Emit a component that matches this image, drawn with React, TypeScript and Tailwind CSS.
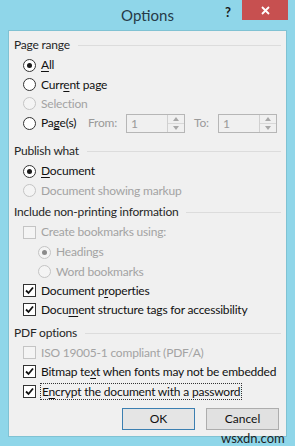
import React from "react";

const FONT = { fontFamily: 'Lato, "Noto Sans", sans-serif' };

function Radio({ checked = false, disabled = false }: { checked?: boolean; disabled?: boolean }) {
  return (
    <span
      className={
        "flex items-center justify-center w-[13px] h-[13px] rounded-full border shrink-0 " +
        (disabled ? "border-[#c4c4c4] bg-[#f4f4f4]" : "border-[#333333] bg-white")
      }
    >
      {checked && (
        <span className={"w-[5px] h-[5px] rounded-full " + (disabled ? "bg-[#8a8a8a]" : "bg-[#1a1a1a]")} />
      )}
    </span>
  );
}

function Check({ checked = false, disabled = false }: { checked?: boolean; disabled?: boolean }) {
  return (
    <span
      className={
        "flex items-center justify-center w-[13px] h-[13px] border shrink-0 " +
        (disabled ? "border-[#c4c4c4] bg-[#f4f4f4]" : "border-[#333333] bg-white")
      }
    >
      {checked && (
        <svg width="9" height="9" viewBox="0 0 9 9">
          <path d="M1 4.5 L3.5 7 L8 1.5" fill="none" stroke="#111" strokeWidth="1.8" />
        </svg>
      )}
    </span>
  );
}

function Lbl({ pre, u, post, disabled }: { pre: string; u?: string; post?: string; disabled?: boolean }) {
  return (
    <span className={"whitespace-nowrap " + (disabled ? "text-[#a3a3a3]" : "text-[#111111]")}>
      {pre}
      {u && <span className="underline underline-offset-2">{u}</span>}
      {post}
    </span>
  );
}

function Header({ text, mt }: { text: string; mt: string }) {
  return (
    <div className={"flex items-center h-[20px] pr-[5px] " + mt}>
      <span className="text-[#262626] whitespace-nowrap">{text}</span>
      <span className="flex-1 h-px bg-[#dcdcdc] ml-[8px]" />
    </div>
  );
}

function Spin() {
  return (
    <div className="flex h-[19px] w-[59px] shrink-0 border border-[#b6b6b6] bg-[#f0f0f0]">
      <span className="flex-1 pl-[4px] text-[#9a9a9a] leading-[17px]">1</span>
      <span className="w-[17px] border-l border-[#d0d0d0] flex flex-col">
        <span className="flex-1 flex items-center justify-center border-b border-[#d8d8d8]">
          <svg width="6" height="4" viewBox="0 0 6 4"><path d="M0 4 L3 0 L6 4 Z" fill="#a8a8a8" /></svg>
        </span>
        <span className="flex-1 flex items-center justify-center">
          <svg width="6" height="4" viewBox="0 0 6 4"><path d="M0 0 L3 4 L6 0 Z" fill="#a8a8a8" /></svg>
        </span>
      </span>
    </div>
  );
}

export default function App() {
  return (
    <div className="relative w-[295px] h-[446px] bg-[#8fd6e9] overflow-hidden text-[12px]" style={FONT}>
      {/* title bar */}
      <div className="relative h-[30px]">
        <div className="absolute inset-x-0 top-[4px] text-center text-[15px] leading-[22px] text-[#253a47]">Options</div>
        <div className="absolute left-[225px] top-[3px] text-[13px] font-bold text-[#1a1a1a] leading-[18px]">?</div>
        <div className="absolute left-[242px] top-0 w-[46px] h-[20px] bg-[#c75050] flex items-center justify-center">
          <svg width="9" height="9" viewBox="0 0 9 9">
            <path d="M1 1 L8 8 M8 1 L1 8" stroke="#fff" strokeWidth="1.8" />
          </svg>
        </div>
      </div>

      {/* panel */}
      <div className="mx-[8px] h-[407px] bg-[#f0f0f0] border border-[#80c2d3] pl-[5px] pt-[4px] flex flex-col tracking-[-0.2px]">
        <Header text="Page range" mt="" />
        <div className="pl-[9px] flex flex-col">
          <div className="flex items-center h-[20px] gap-[5px]"><Radio checked /><Lbl pre="" u="A" post="ll" /></div>
          <div className="flex items-center h-[19px] gap-[5px]"><Radio /><Lbl pre="Curr" u="e" post="nt page" /></div>
          <div className="flex items-center h-[19px] gap-[5px]"><Radio disabled /><Lbl pre="Selection" disabled /></div>
          <div className="flex items-center h-[20px]">
            <Radio />
            <span className="w-[52px] pl-[5px] shrink-0"><Lbl pre="Pa" u="g" post="e(s)" /></span>
            <span className="w-[38px] shrink-0 text-[#9a9a9a]">From:</span>
            <Spin />
            <span className="w-[24px] ml-[9px] shrink-0 text-[#9a9a9a]">To:</span>
            <Spin />
          </div>
        </div>

        <Header text="Publish what" mt="mt-[8px]" />
        <div className="pl-[9px] flex flex-col">
          <div className="flex items-center h-[20px] gap-[5px]"><Radio checked /><Lbl pre="" u="D" post="ocument" /></div>
          <div className="flex items-center h-[19px] gap-[5px]"><Radio disabled /><Lbl pre="Document showing markup" disabled /></div>
        </div>

        <Header text="Include non-printing information" mt="mt-[2px]" />
        <div className="pl-[9px] flex flex-col">
          <div className="flex items-center h-[20px] gap-[5px]"><Check disabled /><Lbl pre="Create bookmarks using:" disabled /></div>
          <div className="flex items-center h-[20px] gap-[5px] pl-[15px]"><Radio checked disabled /><Lbl pre="Headings" disabled /></div>
          <div className="flex items-center h-[19px] gap-[5px] pl-[15px]"><Radio disabled /><Lbl pre="Word bookmarks" disabled /></div>
          <div className="flex items-center h-[19px] gap-[5px]"><Check checked /><Lbl pre="Document p" u="r" post="operties" /></div>
          <div className="flex items-center h-[19px] gap-[5px]"><Check checked /><Lbl pre="Docu" u="m" post="ent structure tags for accessibility" /></div>
        </div>

        <Header text="PDF options" mt="mt-[4px]" />
        <div className="pl-[9px] flex flex-col">
          <div className="flex items-center h-[19px] gap-[5px]"><Check disabled /><Lbl pre="ISO 19005-1 compliant (PDF/A)" disabled /></div>
          <div className="flex items-center h-[19px] gap-[5px]"><Check checked /><Lbl pre="Bitmap te" u="x" post="t when fonts may not be embedded" /></div>
          <div className="flex items-center h-[20px] gap-[4px]">
            <Check checked />
            <span className="border border-dotted border-[#333] px-[1px] leading-[15px]">
              <Lbl pre="E" u="n" post="crypt the document with a password" />
            </span>
          </div>
        </div>

        <div className="flex justify-end gap-[11px] mt-[7px] pr-[7px] tracking-normal">
          <div className="w-[73px] h-[22px] border border-[#3c7fb1] bg-[#e5e5e5] flex items-center justify-center text-[#111]">OK</div>
          <div className="w-[73px] h-[22px] border border-[#adadad] bg-[#e1e1e1] flex items-center justify-center text-[#111]">Cancel</div>
        </div>
      </div>

      <div className="absolute left-[221px] top-[431px] text-[13px] leading-[14px] text-[#1e1e1e]">wsxdn.com</div>
    </div>
  );
}
